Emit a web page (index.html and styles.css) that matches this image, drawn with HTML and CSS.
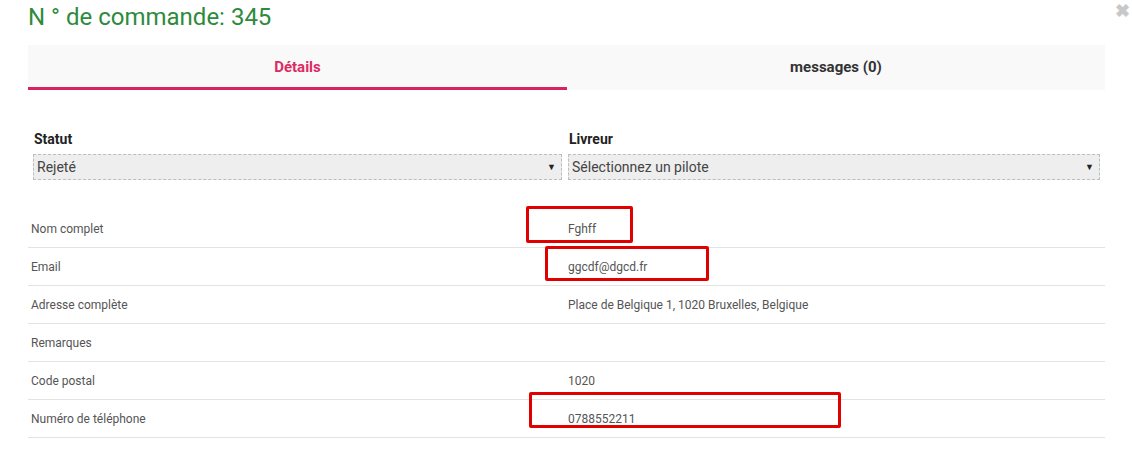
FILE: index.html
```html
<!DOCTYPE html>
<html lang="fr">
<head>
<meta charset="utf-8">
<link rel="stylesheet" href="styles.css">
</head>
<body>
<div class="page">
  <h1 class="title">N ° de commande: 345</h1>
  <span class="close">&#10006;</span>
  <div class="tabs">
    <div class="tab active">Détails</div>
    <div class="tab">messages (0)</div>
  </div>
  <div class="form">
    <div class="field">
      <label class="flabel">Statut</label>
      <div class="select"><span>Rejeté</span><span class="arrow">&#9660;</span></div>
    </div>
    <div class="field">
      <label class="flabel">Livreur</label>
      <div class="select"><span>Sélectionnez un pilote</span><span class="arrow">&#9660;</span></div>
    </div>
  </div>
  <div class="table">
    <div class="row"><div class="k">Nom complet</div><div class="v">Fghff</div></div>
    <div class="row"><div class="k">Email</div><div class="v">ggcdf@dgcd.fr</div></div>
    <div class="row"><div class="k">Adresse complète</div><div class="v">Place de Belgique 1, 1020 Bruxelles, Belgique</div></div>
    <div class="row"><div class="k">Remarques</div><div class="v"></div></div>
    <div class="row"><div class="k">Code postal</div><div class="v">1020</div></div>
    <div class="row"><div class="k">Numéro de téléphone</div><div class="v">0788552211</div></div>
  </div>
  <div class="mark m1"></div>
  <div class="mark m2"></div>
  <div class="mark m3"></div>
</div>
</body>
</html>
```
FILE: styles.css
```css
html, body {
  margin: 0;
  padding: 0;
  background: #fff;
}
body {
  font-family: Roboto, "Liberation Sans", sans-serif;
  color: #333;
}
.page {
  position: relative;
  width: 1132px;
  height: 465px;
  padding: 0 27px 0 28px;
  box-sizing: border-box;
}
.title {
  margin: 0;
  padding-top: 3px;
  height: 45px;
  box-sizing: border-box;
  font-size: 24px;
  line-height: 28px;
  font-weight: 400;
  color: #2e8a3c;
}
.close {
  position: absolute;
  right: 2px;
  top: 1px;
  font-size: 18px;
  line-height: 20px;
  color: #c8c8c8;
  font-weight: bold;
}
.tabs {
  display: flex;
  background: #f9f9f9;
  height: 45px;
}
.tab {
  flex: 0 0 539px;
  text-align: center;
  font-weight: 700;
  font-size: 15px;
  line-height: 45px;
  color: #333;
  box-sizing: border-box;
}
.tab + .tab {
  flex: 1 1 auto;
}
.tab.active {
  color: #dd2a63;
  border-bottom: 3px solid #d8235f;
  line-height: 44px;
  height: 45px;
  overflow: hidden;
}
.form {
  display: grid;
  grid-template-columns: 529px 532px;
  column-gap: 6px;
  padding: 40px 0 0 5px;
}
.flabel {
  display: block;
  font-weight: 700;
  font-size: 14px;
  line-height: 18px;
  color: #222;
  margin: 0 0 6px 1px;
}
.select {
  display: flex;
  justify-content: space-between;
  align-items: center;
  height: 26px;
  box-sizing: border-box;
  border: 1px dashed #bdbdbd;
  background: #eeeeee;
  padding: 0 5px 0 3px;
  font-size: 14px;
  color: #444;
}
.arrow {
  font-size: 9px;
  color: #222;
}
.table {
  margin-top: 30px;
}
.row {
  display: grid;
  grid-template-columns: 537px 1fr;
  height: 38px;
  border-bottom: 1px solid #e3e3e3;
  box-sizing: border-box;
  align-items: center;
  font-size: 12px;
  color: #555;
}
.k {
  padding-left: 3px;
}
.v {
  padding-left: 3px;
}
.mark {
  position: absolute;
  border: 3px solid #e00000;
  box-sizing: border-box;
  border-radius: 2px;
}
.m1 { left: 526px; top: 206px; width: 107px; height: 37px; }
.m2 { left: 545px; top: 246px; width: 164px; height: 35px; }
.m3 { left: 529px; top: 392px; width: 312px; height: 36px; }
```
